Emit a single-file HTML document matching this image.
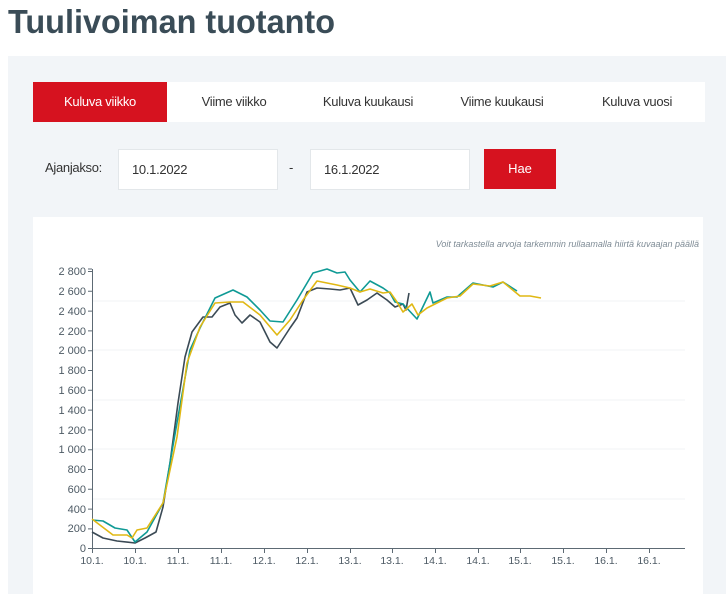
<!DOCTYPE html>
<html><head><meta charset="utf-8"><style>
body{margin:0;width:726px;height:594px;overflow:hidden;background:#fff;font-family:"Liberation Sans",sans-serif;position:relative}
.a{position:absolute}
.panel{left:8px;top:56px;width:718px;height:538px;background:#f2f5f8}
.tabs{left:33px;top:82px;width:672px;height:40px;background:#fff}
.tab{position:absolute;top:0;height:40px;line-height:40px;text-align:center;font-size:13px;color:#333;letter-spacing:-0.3px}
.inp{background:#fff;border:1px solid #e3e7ea;box-sizing:border-box;height:41px;line-height:39px;padding-left:13px;font-size:13px;color:#333;letter-spacing:-0.3px}
</style></head><body>
<svg class="a" style="left:0;top:0" width="360" height="50"><text x="8" y="33" font-family="Liberation Sans" font-weight="bold" font-size="33" fill="#3a4c57" textLength="327" lengthAdjust="spacingAndGlyphs">Tuulivoiman tuotanto</text></svg>
<div class="a panel"></div>
<div class="a tabs">
<div class="tab" style="left:0;width:134px;background:#d6121f;color:#fff">Kuluva viikko</div>
<div class="tab" style="left:134px;width:134px">Viime viikko</div>
<div class="tab" style="left:268px;width:134px">Kuluva kuukausi</div>
<div class="tab" style="left:402px;width:134px">Viime kuukausi</div>
<div class="tab" style="left:536px;width:136px">Kuluva vuosi</div>
</div>
<div class="a" style="left:45px;top:160px;font-size:13px;color:#333;letter-spacing:-0.3px">Ajanjakso:</div>
<div class="a inp" style="left:118px;top:149px;width:160px">10.1.2022</div>
<div class="a" style="left:289px;top:160px;font-size:13px;color:#333">-</div>
<div class="a inp" style="left:310px;top:149px;width:160px">16.1.2022</div>
<div class="a" style="left:484px;top:149px;width:72px;height:40px;line-height:40px;background:#d6121f;color:#fff;text-align:center;font-size:13px">Hae</div>
<div class="a" style="left:33px;top:217px;width:670px;height:377px;background:#fff"></div>
<svg class="a" style="left:0;top:0" width="726" height="594" font-family="Liberation Sans">
<text x="699" y="247" font-size="9" font-style="italic" fill="#7f8c96" text-anchor="end">Voit tarkastella arvoja tarkemmin rullaamalla hiirtä kuvaajan päällä</text>
<g stroke="#f2f3f4" stroke-width="1"><line x1="92" x2="685" y1="301" y2="301"/><line x1="92" x2="685" y1="350" y2="350"/><line x1="92" x2="685" y1="400" y2="400"/><line x1="92" x2="685" y1="449" y2="449"/><line x1="92" x2="685" y1="499" y2="499"/></g>
<g stroke="#5d6a74" stroke-width="1" fill="none">
<line x1="92.5" y1="269" x2="92.5" y2="548"/><line x1="92" y1="548.5" x2="685" y2="548.5"/>
<line x1="88" x2="92" y1="269" y2="269"/>
<path d="M88 271.5h4M88 291.3h4M88 311.1h4M88 330.9h4M88 350.7h4M88 370.5h4M88 390.3h4M88 410.1h4M88 429.9h4M88 449.7h4M88 469.5h4M88 489.3h4M88 509.1h4M88 528.9h4M88 548.5h4"/>
<path d="M92.5 548v5M135.5 548v5M178.5 548v5M221.5 548v5M264.5 548v5M307.5 548v5M350.5 548v5M392.5 548v5M435.5 548v5M478.5 548v5M520.5 548v5M563.5 548v5M606.5 548v5M649.5 548v5"/>
</g>
<g font-size="11" fill="#4d5a64" text-anchor="end">
<text x="86" y="275">2 800</text><text x="86" y="295">2 600</text><text x="86" y="315">2 400</text><text x="86" y="335">2 200</text><text x="86" y="354">2 000</text><text x="86" y="374">1 800</text><text x="86" y="394">1 600</text><text x="86" y="414">1 400</text><text x="86" y="434">1 200</text><text x="86" y="453">1 000</text><text x="86" y="473">800</text><text x="86" y="493">600</text><text x="86" y="513">400</text><text x="86" y="532">200</text><text x="86" y="552">0</text>
</g>
<g font-size="10.5" fill="#4d5a64" text-anchor="middle">
<text x="92" y="564">10.1.</text><text x="135" y="564">10.1.</text><text x="178" y="564">11.1.</text><text x="221" y="564">11.1.</text><text x="264" y="564">12.1.</text><text x="307" y="564">12.1.</text><text x="350" y="564">13.1.</text><text x="392" y="564">13.1.</text><text x="435" y="564">14.1.</text><text x="478" y="564">14.1.</text><text x="520" y="564">15.1.</text><text x="563" y="564">15.1.</text><text x="606" y="564">16.1.</text><text x="649" y="564">16.1.</text>
</g>
<g fill="none" stroke-width="1.6" stroke-linejoin="round">
<polyline stroke="#3b4a55" points="92,532 103,538 117,541 135,543 145,538 156,532 163,507 170,463 178,403 185,357 192,332 203,317 212,317 220,307 230,303 235,315 242,323 250,315 260,322 270,342 277,348 290,328 297,318 307,292 317,288 330,289 340,290 350,288 358,305 367,300 377,293 387,300 395,307 403,304 406,310 409,293"/>
<polyline stroke="#0f9a95" points="92,520 103,521 115,528 127,530 135,542 147,532 163,503 178,417 190,350 200,328 215,298 233,290 247,297 260,310 270,321 283,322 297,300 313,273 327,269 337,273 345,272 350,280 360,292 370,281 383,288 390,293 395,302 403,304 417,319 430,292 433,303 447,297 457,297 473,283 493,287 503,282 517,291"/>
<polyline stroke="#e0b814" points="92,519 113,535 127,535 132,538 137,530 147,528 163,503 177,437 187,363 200,327 215,303 230,302 243,302 260,315 277,335 290,320 303,300 317,281 327,283 337,285 350,288 360,292 370,289 383,293 390,292 397,302 403,312 412,304 418,315 427,308 433,305 447,298 460,296 473,284 490,286 503,282 520,296 530,296 541,298"/>
</g>
</svg>
</body></html>
